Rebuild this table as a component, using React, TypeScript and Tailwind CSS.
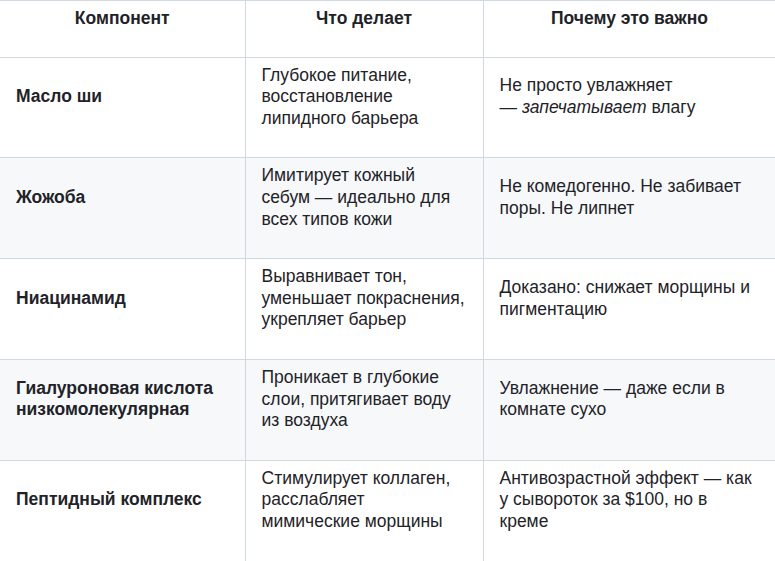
import React from "react";

const rows: { name: React.ReactNode; what: React.ReactNode; why: React.ReactNode }[] = [
  {
    name: "Масло ши",
    what: "Глубокое питание, восстановление липидного барьера",
    why: (
      <>
        Не просто увлажняет <br />— <em>запечатывает</em> влагу
      </>
    ),
  },
  {
    name: "Жожоба",
    what: "Имитирует кожный себум — идеально для всех типов кожи",
    why: "Не комедогенно. Не забивает поры. Не липнет",
  },
  {
    name: "Ниацинамид",
    what: "Выравнивает тон, уменьшает покраснения, укрепляет барьер",
    why: "Доказано: снижает морщины и пигментацию",
  },
  {
    name: "Гиалуроновая кислота низкомолекулярная",
    what: "Проникает в глубокие слои, притягивает воду из воздуха",
    why: "Увлажнение — даже если в комнате сухо",
  },
  {
    name: "Пептидный комплекс",
    what: "Стимулирует коллаген, расслабляет мимические морщины",
    why: "Антивозрастной эффект — как у сывороток за $100, но в креме",
  },
];

export default function App() {
  return (
    <div
      className="w-[775px] h-[561px] overflow-hidden bg-white text-[#1f2328]"
      style={{ fontFamily: '"Liberation Sans", Arial, sans-serif' }}
    >
      <table className="w-[776px] border-collapse table-fixed text-[17.5px] leading-[21.6px]">
        <colgroup>
          <col className="w-[245px]" />
          <col className="w-[238px]" />
          <col className="w-[293px]" />
        </colgroup>
        <thead>
          <tr className="bg-white">
            <th className="border-t border-b border-r border-[#d1d9e0] pl-[16px] pr-[16px] pt-[7px] pb-[27px] font-bold text-center align-middle">
              Компонент
            </th>
            <th className="border-t border-b border-r border-[#d1d9e0] pl-[16px] pr-[16px] pt-[7px] pb-[27px] font-bold text-center align-middle">
              Что делает
            </th>
            <th className="border-t border-b border-r border-[#d1d9e0] pl-[16px] pr-[16px] pt-[7px] pb-[27px] font-bold text-center align-middle">
              Почему это важно
            </th>
          </tr>
        </thead>
        <tbody>
          {rows.map((r, i) => (
            <tr key={i} className={i % 2 === 1 ? "bg-[#f6f8fa]" : "bg-white"}>
              <td className="border-b border-r border-[#d1d9e0] pl-[16px] pr-[16px] pt-[7px] pb-[28px] font-bold align-middle">
                {r.name}
              </td>
              <td className="border-b border-r border-[#d1d9e0] pl-[16px] pr-[16px] pt-[7px] pb-[28px] align-middle">
                {r.what}
              </td>
              <td className="border-b border-r border-[#d1d9e0] pl-[16px] pr-[16px] pt-[7px] pb-[28px] align-middle">
                {r.why}
              </td>
            </tr>
          ))}
        </tbody>
      </table>
    </div>
  );
}
